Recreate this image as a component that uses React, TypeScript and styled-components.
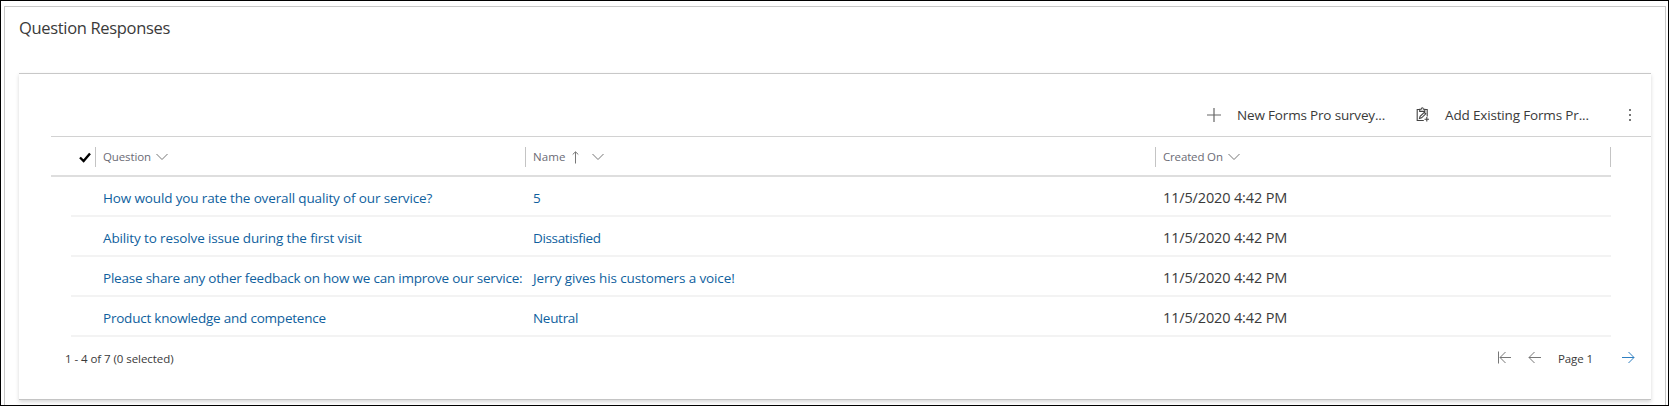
import React from 'react';
import styled, { createGlobalStyle } from 'styled-components';

const GlobalStyle = createGlobalStyle`
  * { box-sizing: border-box; }
  body {
    margin: 0;
    background: #fff;
    font-family: 'Segoe UI', 'Open Sans', 'Noto Sans', sans-serif;
    color: #3a3a3a;
  }
  svg { display: block; flex: none; }
`;

const Page = styled.div`
  width: 1669px;
  height: 406px;
  padding: 5px 2px 0 3px;
  border: 1px solid #000;
  overflow: hidden;
`;

const Section = styled.section`
  height: 400px;
  padding: 0 14px;
  border: 1px solid #c8c8c8;
  border-bottom: 0;
`;

const Title = styled.h2`
  height: 66px;
  margin: 0;
  padding-top: 9px;
  font-size: 16.5px;
  line-height: 24px;
  font-weight: 400;
  letter-spacing: -0.33px;
`;

const Card = styled.div`
  width: 1632px;
  height: 327px;
  border-top: 1px solid #c8c8c8;
  border-bottom: 1px solid #c4c4c4;
  box-shadow: 0 2px 4px rgba(0, 0, 0, 0.16);
`;

const Toolbar = styled.div`
  display: flex;
  align-items: center;
  height: 63px;
  margin-left: 32px;
  padding: 19px 18px 0 1156px;
  border-bottom: 1px solid #d2d2d2;
`;

const Command = styled.button<{ $width: number; $tracking: number }>`
  display: flex;
  align-items: center;
  gap: 16px;
  width: ${(p) => p.$width}px;
  height: 24px;
  padding: 0;
  border: 0;
  background: none;
  color: #3a3a3a;
  font: 400 13.5px/24px 'Segoe UI', 'Open Sans', 'Noto Sans', sans-serif;
  letter-spacing: ${(p) => p.$tracking}px;
  white-space: nowrap;
`;

const CommandLabel = styled.span`
  padding-top: 1px;
`;

const HeaderRow = styled.div`
  display: grid;
  grid-template-columns: 24px 20px 430px 630px 455px 1px;
  align-items: center;
  width: 1560px;
  height: 40px;
  margin-left: 32px;
  padding-top: 2px;
  border-bottom: 2px solid #dedede;
`;

const CheckCell = styled.div`
  grid-column: 2;
  padding-left: 4px;
`;

const HeaderCell = styled.div<{ $tracking?: number }>`
  display: flex;
  align-items: center;
  height: 20px;
  padding-left: 7px;
  border-left: 1px solid #c4c4c4;
  color: #6b6b75;
  font-size: 11.5px;
  line-height: 20px;
  letter-spacing: ${(p) => p.$tracking ?? 0}px;
  white-space: nowrap;
`;

const SortIcons = styled.span<{ $inset?: number }>`
  display: flex;
  align-items: center;
  gap: 13px;
  margin-left: ${(p) => p.$inset ?? 5}px;
`;

const Row = styled.div`
  display: grid;
  grid-template-columns: 32px 430px 630px 1fr;
  align-items: center;
  width: 1540px;
  height: 40px;
  margin-left: 52px;
  border-bottom: 2px solid #f3f3f3;
`;

const Link = styled.a<{ $column: number; $tracking: number }>`
  grid-column: ${(p) => p.$column};
  padding-top: 4px;
  color: #0f5f9e;
  font-size: 13.5px;
  line-height: 20px;
  letter-spacing: ${(p) => p.$tracking}px;
  white-space: nowrap;
`;

const DateCell = styled.span`
  padding-top: 3px;
  font-size: 14.5px;
  line-height: 20px;
  letter-spacing: -0.15px;
`;

const Footer = styled.div`
  display: flex;
  justify-content: space-between;
  align-items: center;
  height: 43px;
  padding: 0 16px 0 46px;
  font-size: 11.5px;
  line-height: 20px;
  letter-spacing: -0.06px;
`;

const Pager = styled.div`
  display: flex;
  align-items: center;
`;

const PagerButton = styled.button<{ $active?: boolean }>`
  display: block;
  width: 30px;
  height: 16px;
  padding: 0;
  margin-top: -3px;
  border: 0;
  background: none;
  color: ${(p) => (p.$active ? '#2f7fc1' : '#777')};
`;

const NextButton = styled(PagerButton)`
  width: 13px;
`;

const PageLabel = styled.span`
  width: 64px;
  letter-spacing: -0.1px;
`;

const Chevron = () => (
  <svg width="12" height="8" viewBox="0 0 12 8" fill="none" stroke="#777">
    <path d="M.5 1 6 6.5 11.5 1" />
  </svg>
);

const ArrowUp = () => (
  <svg width="7" height="13" viewBox="0 0 7 13" fill="none" stroke="#777">
    <path d="M3.5 12.5V1M.7 3.5 3.5.8l2.8 2.7" />
  </svg>
);

const Check = () => (
  <svg width="12" height="11" viewBox="0 0 12 11" fill="none" stroke="#000" strokeWidth="2.4">
    <path d="M1 5.5 4.6 9 11 1.4" />
  </svg>
);

const Plus = () => (
  <svg width="14" height="14" viewBox="0 0 14 14" stroke="#666">
    <path d="M7 0v14M0 7h14" strokeWidth="1.2" />
  </svg>
);

const ClipboardEdit = () => (
  <svg width="13" height="15" viewBox="0 0 13 15" fill="none" stroke="#444" strokeWidth="1.1">
    <path d="M7.8 13.5H1.2V2.5h2.5M8.8 2.5h2.4v7M3.7 4.4V2.3h1.5Q5.4.7 6.3.7t1.1 1.6h1.4v2.1Z" />
    <path d="m3.5 11.5.6-2.2 4.3-4 1.4 1.5-4.2 4Z" />
    <path d="M10.8 10v4.5M8.5 12.2H13" />
  </svg>
);

const Kebab = () => (
  <svg width="4" height="14" viewBox="0 0 4 14" fill="#777">
    <path d="M1 1h2v2H1zM1 6h2v2H1zM1 11h2v2H1z" />
  </svg>
);

const Arrow = ({ first = false, right = false }: { first?: boolean; right?: boolean }) => (
  <svg width="13" height="13" viewBox="0 0 13 13" fill="none" stroke="currentColor">
    {right ? (
      <path d="M0 6.5h12M6.5 1 12 6.5 6.5 12" />
    ) : first ? (
      <path d="M.5.5v12M2 6.5h11M7.5 1 2 6.5 7.5 12" />
    ) : (
      <path d="M1 6.5h12M6.5 1 1 6.5 6.5 12" />
    )}
  </svg>
);

const rows = [
  { q: 'How would you rate the overall quality of our service?', qt: -0.14, n: '5', nt: 0 },
  { q: 'Ability to resolve issue during the first visit', qt: -0.13, n: 'Dissatisfied', nt: -0.36 },
  {
    q: 'Please share any other feedback on how we can improve our service:',
    qt: -0.215,
    n: 'Jerry gives his customers a voice!',
    nt: -0.12,
  },
  { q: 'Product knowledge and competence', qt: -0.22, n: 'Neutral', nt: -0.3 },
];

export default function App() {
  return (
    <>
      <GlobalStyle />
      <Page>
        <Section>
          <Title>Question Responses</Title>
          <Card>
            <Toolbar>
              <Command $width={209} $tracking={-0.17}>
                <Plus />
                <CommandLabel>New Forms Pro survey...</CommandLabel>
              </Command>
              <Command $width={212} $tracking={-0.16}>
                <ClipboardEdit />
                <CommandLabel>Add Existing Forms Pr...</CommandLabel>
              </Command>
              <Kebab />
            </Toolbar>
            <HeaderRow>
              <CheckCell>
                <Check />
              </CheckCell>
              <HeaderCell $tracking={-0.12}>
                Question
                <SortIcons>
                  <Chevron />
                </SortIcons>
              </HeaderCell>
              <HeaderCell $tracking={0.1}>
                Name
                <SortIcons $inset={6}>
                  <ArrowUp />
                  <Chevron />
                </SortIcons>
              </HeaderCell>
              <HeaderCell $tracking={-0.16}>
                Created On
                <SortIcons>
                  <Chevron />
                </SortIcons>
              </HeaderCell>
              <HeaderCell />
            </HeaderRow>
            {rows.map((r) => (
              <Row key={r.q}>
                <Link $column={2} $tracking={r.qt}>
                  {r.q}
                </Link>
                <Link $column={3} $tracking={r.nt}>
                  {r.n}
                </Link>
                <DateCell>11/5/2020 4:42 PM</DateCell>
              </Row>
            ))}
            <Footer>
              <span>1 - 4 of 7 (0 selected)</span>
              <Pager>
                <PagerButton>
                  <Arrow first />
                </PagerButton>
                <PagerButton>
                  <Arrow />
                </PagerButton>
                <PageLabel>Page 1</PageLabel>
                <NextButton $active>
                  <Arrow right />
                </NextButton>
              </Pager>
            </Footer>
          </Card>
        </Section>
      </Page>
    </>
  );
}
